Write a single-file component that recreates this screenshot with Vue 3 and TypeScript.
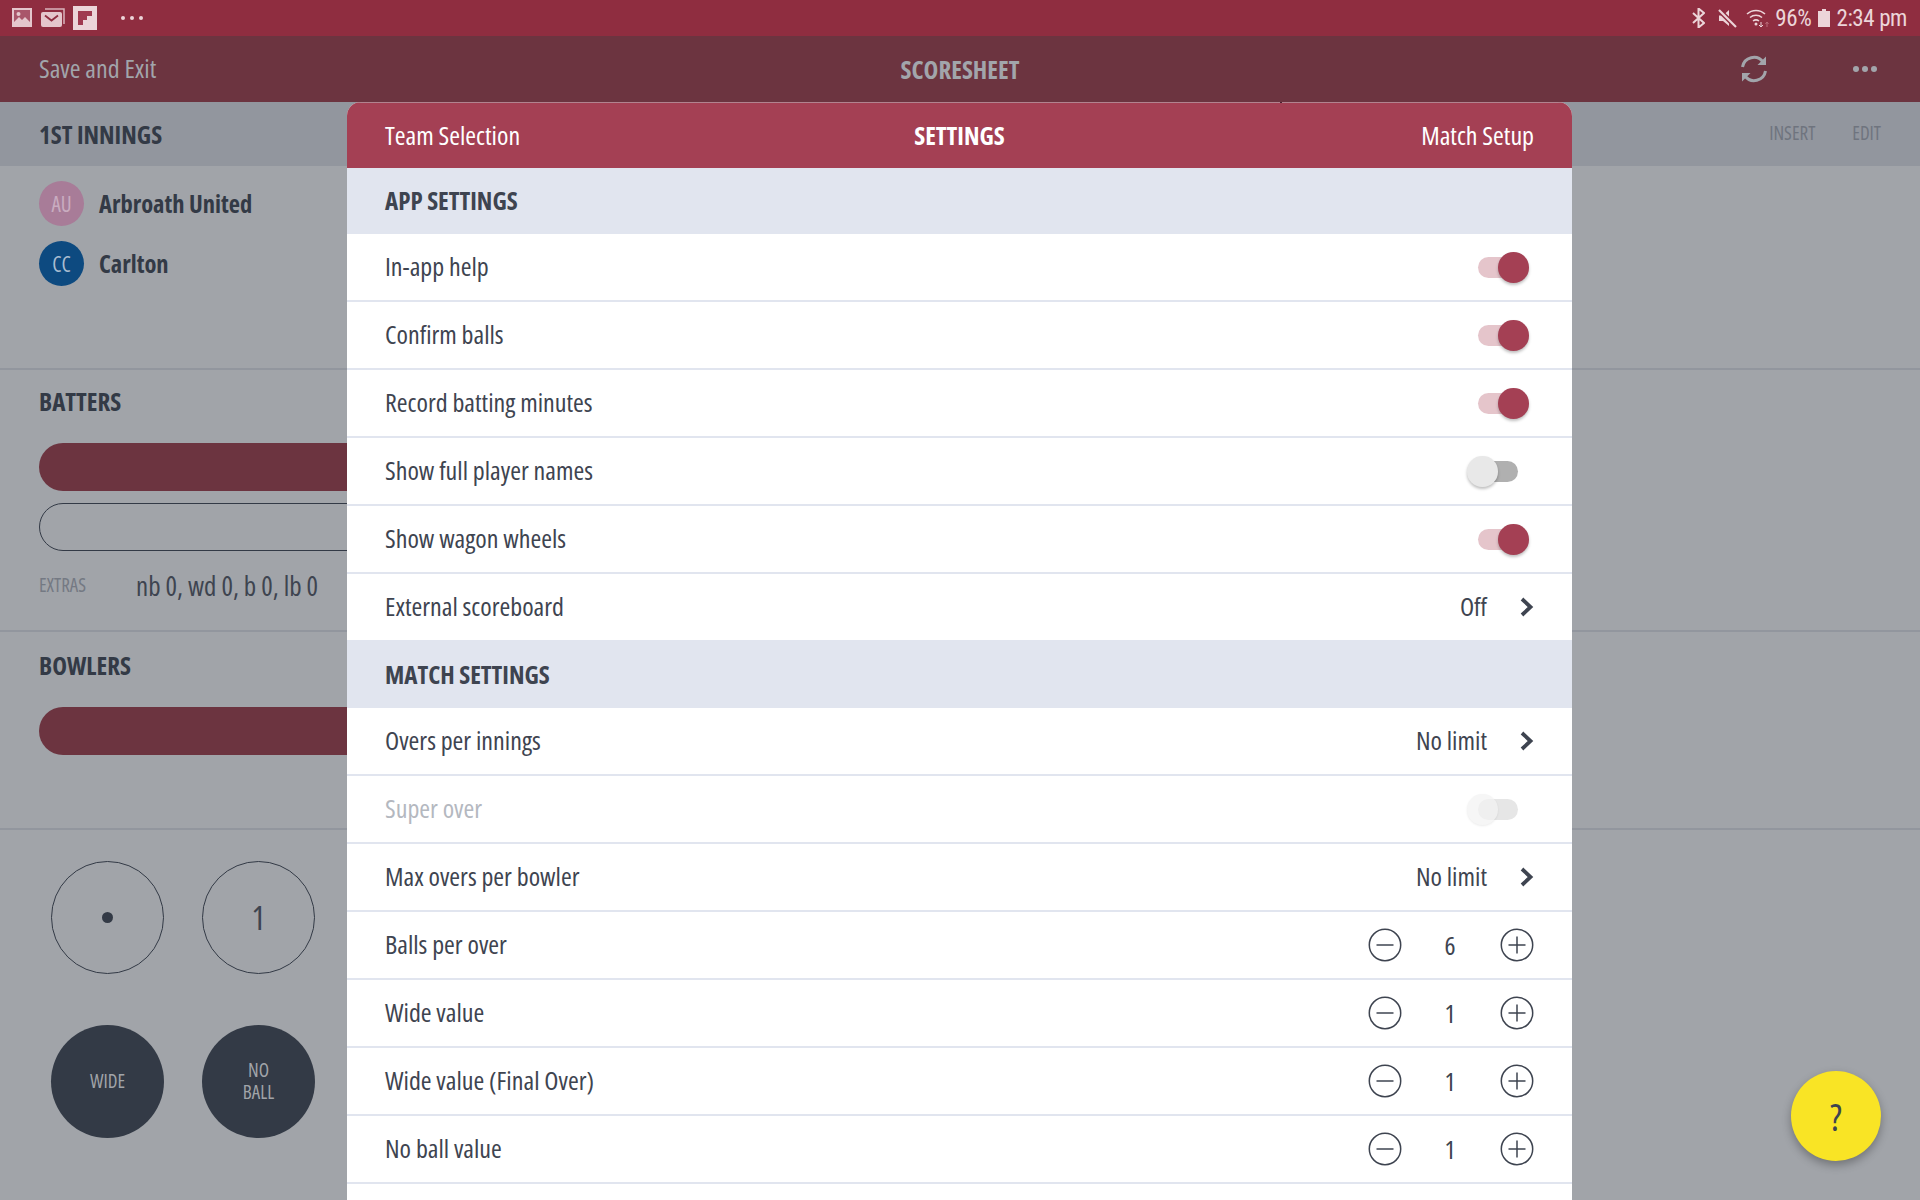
<script setup lang="ts">
type Row = { label: string; kind: 'on' | 'off' | 'disabled' | 'link' | 'step'; value?: string; last?: boolean; muted?: boolean }
const appRows: Row[] = [
  { label: 'In-app help', kind: 'on' },
  { label: 'Confirm balls', kind: 'on' },
  { label: 'Record batting minutes', kind: 'on' },
  { label: 'Show full player names', kind: 'off' },
  { label: 'Show wagon wheels', kind: 'on' },
  { label: 'External scoreboard', kind: 'link', value: 'Off', last: true },
]
const matchRows: Row[] = [
  { label: 'Overs per innings', kind: 'link', value: 'No limit' },
  { label: 'Super over', kind: 'disabled', muted: true },
  { label: 'Max overs per bowler', kind: 'link', value: 'No limit' },
  { label: 'Balls per over', kind: 'step', value: '6' },
  { label: 'Wide value', kind: 'step', value: '1' },
  { label: 'Wide value (Final Over)', kind: 'step', value: '1' },
  { label: 'No ball value', kind: 'step', value: '1' },
]
const groups = [
  { title: 'APP SETTINGS', rows: appRows },
  { title: 'MATCH SETTINGS', rows: matchRows },
]
</script>

<template>
  <div class="page">
    <div class="status">
      <div class="status-left">
        <svg width="22" height="20" viewBox="0 0 22 20"><rect x="1" y="0" width="20" height="19" fill="#e4c6cc"/><rect x="3" y="2" width="16" height="15" fill="#a9566a"/><path d="M3 14l5-5 3 3 3-3 5 5v3H3z" fill="#e4c6cc"/><circle cx="7.500" cy="6" r="2" fill="#e4c6cc"/></svg>
        <svg width="24" height="20" viewBox="0 0 24 20"><path d="M4 1h19v15" fill="none" stroke="#d9b4bc" stroke-width="1.500"/><rect x="0" y="4" width="21" height="15" rx="2" fill="#e4c6cc"/><path d="M4 7.500l6.500 5 6.500-5" fill="none" stroke="#8f2d40" stroke-width="1.800"/></svg>
        <svg width="24" height="24" viewBox="0 0 24 24"><rect width="24" height="24" fill="#ecd5d9"/><path d="M5 5h14v5h-5v4H10v5H5z" fill="#a03a50"/></svg>
        <div class="more-dots"><i></i><i></i><i></i></div>
      </div>
      <div class="status-right">
        <svg width="13" height="20" viewBox="0 0 13 20"><path d="M1 5l11 10-5.500 4.500V0.500L12 5 1 15" fill="none" stroke="#ecd5d9" stroke-width="2"/></svg>
        <svg class="mute" width="19" height="19" viewBox="0 0 19 19"><path d="M1 6.500h4L11 1v16l-6-5H1z" fill="#ecd5d9"/><path d="M0 0l18 18" stroke="#8f2d40" stroke-width="5"/><path d="M1 1l17 17" stroke="#ecd5d9" stroke-width="2.200"/></svg>
        <svg class="wifi" width="24" height="20" viewBox="0 0 24 20"><path d="M1 6a13 13 0 0 1 18 0M4 9.500a9 9 0 0 1 12 0M7 13a5 5 0 0 1 6 0" fill="none" stroke="#ecd5d9" stroke-width="1.500"/><circle cx="10" cy="16" r="1.500" fill="#ecd5d9"/><path d="M15 14v5M13 17l2 2 2-2" fill="none" stroke="#ecd5d9" stroke-width="1"/><path d="M21 19v-5M19.500 16l1.500-2 1.500 2" fill="none" stroke="#b96a78" stroke-width="1"/></svg>
        <span class="st-text pct">96%</span>
        <svg class="batt" width="12" height="18" viewBox="0 0 12 18"><path d="M4 0h4v2h4v16H0V2h4z" fill="#ecd5d9"/></svg>
        <span class="st-text">2:34 pm</span>
      </div>
    </div>

    <header class="appbar">
      <span class="save">Save and Exit</span>
      <span class="apptitle">SCORESHEET</span>
      <div class="appicons">
        <svg width="28" height="28" viewBox="0 0 28 28" fill="none" stroke="#a2a5ab" stroke-width="3"><path d="M2.500 12A11.500 11.500 0 0 1 23 7"/><path d="M25.500 16A11.500 11.500 0 0 1 5 21"/><path d="M26 1.500V10h-8.500z" fill="#a2a5ab" stroke="none"/><path d="M2 26.500V18h8.500z" fill="#a2a5ab" stroke="none"/></svg>
        <div class="bar-dots"><i></i><i></i><i></i></div>
      </div>
    </header>

    <div class="innings">
      <span class="inn-title">1ST INNINGS</span>
      <div class="inn-actions"><span>INSERT</span><span>EDIT</span></div>
    </div>

    <main class="board">
      <section class="teams">
        <div class="team"><span class="avatar au">AU</span><span class="team-name">Arbroath United</span></div>
        <div class="team"><span class="avatar cc">CC</span><span class="team-name">Carlton</span></div>
      </section>
      <section class="batters">
        <h2>BATTERS</h2>
        <div class="pill solid"></div>
        <div class="pill line"></div>
        <div class="extras"><span class="ex-label">EXTRAS</span><span class="ex-val">nb 0, wd 0, b 0, lb 0</span></div>
      </section>
      <section class="bowlers">
        <h2>BOWLERS</h2>
        <div class="pill solid"></div>
      </section>
      <section class="balls">
        <div class="ball-row">
          <div class="ball"><span class="pip"></span></div>
          <div class="ball num">1</div>
        </div>
        <div class="ball-row">
          <div class="ball dark"><span>WIDE</span></div>
          <div class="ball dark"><span>NO<br />BALL</span></div>
        </div>
      </section>
    </main>

    <div class="modal">
      <div class="modal-head">
        <span>Team Selection</span>
        <strong>SETTINGS</strong>
        <span>Match Setup</span>
      </div>
      <template v-for="g in groups" :key="g.title">
        <div class="group-title"><span>{{ g.title }}</span></div>
        <div v-for="r in g.rows" :key="r.label" class="row" :class="{ last: r.last, muted: r.muted }">
          <span class="row-label">{{ r.label }}</span>
          <div v-if="r.kind === 'on' || r.kind === 'off' || r.kind === 'disabled'" class="toggle" :class="r.kind"><span class="knob"></span></div>
          <div v-else-if="r.kind === 'link'" class="link">
            <span class="row-label">{{ r.value }}</span>
            <svg width="14" height="20" viewBox="0 0 14 20" fill="none" stroke="#3e4450" stroke-width="3.800"><path d="M2 2l8.500 8L2 18"/></svg>
          </div>
          <div v-else class="stepper">
            <svg width="34" height="34" viewBox="0 0 34 34" fill="none" stroke="#3e4450" stroke-width="1.500"><circle cx="17" cy="17" r="15.700"/><path d="M8.500 17h17"/></svg>
            <span class="step-val">{{ r.value }}</span>
            <svg width="34" height="34" viewBox="0 0 34 34" fill="none" stroke="#3e4450" stroke-width="1.500"><circle cx="17" cy="17" r="15.700"/><path d="M8.500 17h17M17 8.500v17"/></svg>
          </div>
        </div>
      </template>
    </div>
    <span class="notch"></span>

    <div class="fab">?</div>
  </div>
</template>

<style>
html, body { margin: 0; background: #a1a4a9; }
</style>

<style scoped>
.page {
  position: relative;
  width: 1920px;
  height: 1200px;
  overflow: hidden;
  background: #a1a4a9;
  color: #333a46;
  font-family: "Open Sans", "Noto Sans", sans-serif;
  font-stretch: 75%;
}
.status {
  height: 36px;
  background: #8f2d40;
  display: flex;
  align-items: center;
  justify-content: space-between;
  padding: 0 13px 0 11px;
}
.status-left, .status-right { display: flex; align-items: center; }
.status-left { gap: 8px; }
.status-right { gap: 6px; }
.mute { margin-left: 7px; }
.wifi { margin-left: 3px; margin-right: -1px; }
.batt { margin-left: 1px; }
.more-dots { display: flex; gap: 5px; margin-left: 16px; }
.more-dots i { width: 4px; height: 4px; border-radius: 50%; background: #ecd5d9; }
.st-text { font-family: Roboto, sans-serif; font-size: 23px; color: #ecd5d9; font-stretch: 87%; letter-spacing: -0.4px; }
.appbar {
  height: 66px;
  background: #6c3440;
  display: flex;
  align-items: center;
  justify-content: space-between;
  padding: 0 43px 0 39px;
  position: relative;
  color: #a2a5ab;
  font-size: 26px;
  font-weight: 370;
  font-stretch: 81%;
}
.save { padding-bottom: 2px; }
.apptitle {
  position: absolute;
  left: 0;
  right: 0;
  text-align: center;
  font-weight: 700;
  font-size: 25px;
  font-stretch: 75%;
}
.appicons { display: flex; align-items: center; gap: 85px; }
.bar-dots { display: flex; gap: 2.500px; }
.bar-dots i { width: 6.500px; height: 6.500px; border-radius: 50%; background: #a2a5ab; }
.innings {
  height: 64px;
  background: #92969e;
  display: flex;
  align-items: center;
  justify-content: space-between;
  padding: 0 39px;
}
.inn-title { font-size: 25px; font-weight: 700; }
.inn-actions { display: flex; gap: 37px; font-size: 19px; color: #6f747e; font-weight: 370; font-stretch: 78%; padding-bottom: 2px; }
.board { display: flex; flex-direction: column; }
.teams { height: 204px; padding: 15px 39px 0; box-sizing: border-box; display: flex; flex-direction: column; gap: 15px; border-bottom: 2px solid #92969e; }
.team { display: flex; align-items: center; gap: 15px; height: 45px; }
.avatar { width: 45px; height: 45px; border-radius: 50%; display: flex; align-items: center; justify-content: center; font-size: 21px; font-weight: 370; }
.au { background: #a87c98; color: #c9acc0; }
.cc { background: #0d4a80; color: #a9bdd0; }
.team-name { font-size: 24.500px; font-weight: 700; }
section h2 { margin: 0; font-size: 25px; line-height: 32px; font-weight: 700; }
.batters { height: 262px; padding: 15px 0 0 39px; box-sizing: border-box; border-bottom: 2px solid #92969e; }
.pill { height: 48px; width: 500px; border-radius: 24px; box-sizing: border-box; }
.solid { background: #6c3440; }
.line { border: 1px solid #333a46; }
.batters .solid { margin-top: 26px; }
.batters .line { margin-top: 12px; }
.extras { display: flex; align-items: center; margin-top: 18px; height: 32px; }
.ex-label { font-size: 19px; color: #747983; width: 97px; font-weight: 370; font-stretch: 78%; }
.ex-val { font-size: 27px; color: #3e4450; font-weight: 370; font-stretch: 79%; }
.bowlers { height: 198px; padding: 17px 0 0 39px; box-sizing: border-box; border-bottom: 2px solid #92969e; }
.bowlers .solid { margin-top: 26px; }
.balls { padding: 31px 0 0 51px; display: flex; flex-direction: column; gap: 51px; }
.ball-row { display: flex; gap: 38px; }
.ball {
  width: 113px;
  height: 113px;
  border-radius: 50%;
  box-sizing: border-box;
  border: 1px solid #333a46;
  display: flex;
  align-items: center;
  justify-content: center;
  text-align: center;
}
.pip { width: 11px; height: 11px; border-radius: 50%; background: #333a46; }
.num { font-size: 33px; color: #3e4450; font-weight: 400; }
.dark { background: #333a46; color: #a1a4a9; font-size: 19px; line-height: 22px; border: 0; font-weight: 370; }
.dark span { padding-bottom: 2px; }
.modal {
  position: absolute;
  left: 347px;
  top: 102px;
  bottom: 0;
  width: 1225px;
  background: #fff;
  border-radius: 14px 14px 0 0;
  overflow: hidden;
  color: #3e4450;
  font-size: 26px;
  font-weight: 370;
  font-stretch: 81%;
}
.modal-head {
  height: 66px;
  box-sizing: border-box;
  background: #a44054;
  border-top: 1px solid #b2838f;
  color: #fff;
  display: flex;
  align-items: center;
  justify-content: space-between;
  padding: 0 38px 2px;
  position: relative;
}
.modal-head strong { position: absolute; left: 0; right: 0; text-align: center; font-weight: 700; font-size: 25px; font-stretch: 75%; }
.notch { position: absolute; left: 1280px; top: 102px; width: 2px; height: 1px; background: #4a2030; }
.group-title {
  height: 68px;
  background: #e1e5ef;
  display: flex;
  align-items: center;
  padding: 0 38px;
  font-weight: 700;
  font-size: 25px;
  font-stretch: 75%;
  color: #3e4450;
}
.modal-head + .group-title span { padding-bottom: 2px; }
.modal-head + .group-title { height: 66px; }
.row {
  height: 68px;
  box-sizing: border-box;
  border-bottom: 2px solid #e1e5ef;
  display: flex;
  align-items: center;
  justify-content: space-between;
  padding: 0 38px;
}
.row-label { padding-bottom: 2px; }
.row.last { height: 66px; border-bottom: 0; }
.row.muted { color: #b4b8bf; }
.toggle {
  width: 40px;
  height: 21px;
  border-radius: 11px;
  position: relative;
  margin-right: 16px;
}
.toggle.on { background: #e5c5cb; }
.toggle.off { background: #b0b0b0; }
.toggle.disabled { background: #e6e6e6; }
.knob {
  position: absolute;
  width: 30.500px;
  height: 30.500px;
  border-radius: 50%;
  top: -4.500px;
  box-shadow: 0 2px 3px rgba(0, 0, 0, 0.25);
}
.on .knob { background: #a44054; left: 20px; }
.off .knob { background: #e8e8e8; left: -11px; }
.disabled .knob { background: #f3f3f3; opacity: 0.7; left: -11px; box-shadow: 0 1px 2px rgba(0, 0, 0, 0.1); }
.link { display: flex; align-items: center; gap: 33px; }
.stepper { display: flex; align-items: center; }
.step-val { width: 98px; text-align: center; padding-right: 2px; box-sizing: border-box; }
.fab {
  position: absolute;
  left: 1791px;
  top: 1071px;
  width: 90px;
  height: 90px;
  border-radius: 50%;
  background: #f9e425;
  box-shadow: 0 4px 10px rgba(0, 0, 0, 0.3);
  display: flex;
  align-items: center;
  justify-content: center;
  font-size: 38px;
  font-weight: 400;
  color: #3e4450;
}
</style>
